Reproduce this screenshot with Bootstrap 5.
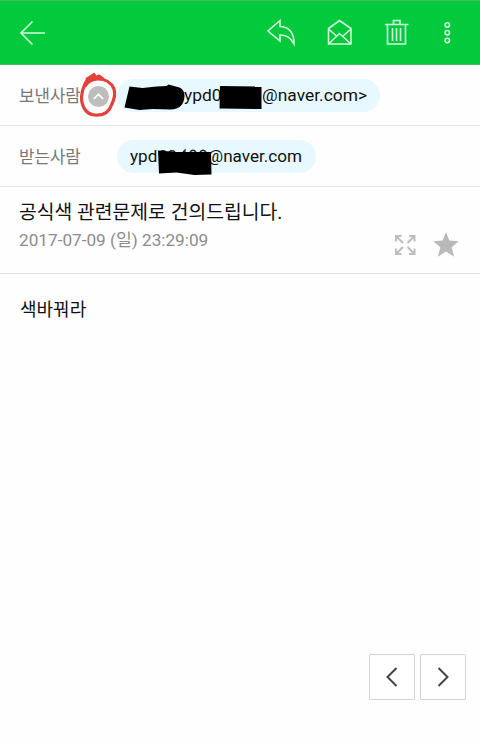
<!DOCTYPE html>
<html lang="ko">

<head>
    <meta charset="UTF-8" />
    <meta name="viewport" content="width=device-width, initial-scale=1" />
    <title>메일</title>
    <!-- Bootstrap 5 CSS -->
    <link href="https://cdn.jsdelivr.net/npm/bootstrap@5.3.0/dist/css/bootstrap.min.css" rel="stylesheet" />
    <style>
        body {
            font-family: Roboto, "Noto Sans CJK KR", sans-serif;
            background: #fefefe;
            color: #111;
            overflow: hidden;
        }

        svg {
            display: block;
            fill: none;
            overflow: visible;
        }

        .topbar {
            height: 65px;
            background: #03c93c;
            border-top: 1px solid #46b963;
            border-bottom: 1px solid #3cbd60;
        }

        .topbar svg {
            stroke: #d4f7dc;
            stroke-width: 1.6;
        }

        .btn-icon {
            padding: 0;
            border: 0;
        }

        .addr-row {
            height: 61px;
            border-bottom: 1px solid #e3e3e3;
        }

        .addr-label {
            width: 98px;
            padding: 3px 0 0 19px;
            font-size: 16.8px;
            color: #777;
        }

        .fold {
            left: 78px;
            top: 7px;
        }

        .addr-chip {
            height: 33px;
            border-radius: 17px;
            background: #e8f8ff;
            font-size: 17.4px;
            line-height: 33px;
            white-space: pre;
        }

        .chip-from {
            width: 263px;
            margin-right: 100px;
        }

        .chip-to {
            width: 199px;
            margin-left: 19px;
            font-size: 17.1px;
        }

        .scribble {
            fill: #000;
        }

        .subject-box {
            height: 87px;
            padding: 12px 19px 0;
            border-bottom: 1px solid #e0e0e0;
        }

        .subject {
            font-size: 19.3px;
            line-height: 28px;
            letter-spacing: .02px;
        }

        .sent-at {
            font-size: 17.2px;
            line-height: 27px;
            color: #8c8c8c;
        }

        .mail-body {
            height: 380px;
            padding: 22px 20px 0;
            font-size: 18px;
            line-height: 27px;
        }

        .pager {
            gap: 5px;
            padding-right: 14px;
        }

        .btn-page {
            width: 46px;
            height: 46px;
            padding: 0;
            border: 1.5px solid #d4d4d4;
            border-radius: 1px;
            background: #fff;
        }

        .btn-page svg {
            margin: auto;
            stroke: #444;
            stroke-width: 2;
        }
    </style>
</head>

<body>
    <nav class="topbar d-flex align-items-start">
        <button type="button" class="btn btn-icon" aria-label="뒤로">
            <svg width="60" height="63"><path d="M45 32H21M32.500 20.500L21 32l11.500 11.500" /></svg>
        </button>
        <div class="ms-auto d-flex">
            <button type="button" class="btn btn-icon" aria-label="답장">
                <svg width="56" height="63" viewBox="258 1 56 63"><path d="M280 20.500L268 31l12 10v-6c6.500 0 11 3 14 8.800C294.500 33 289 26.700 280 26.500z" /></svg>
            </button>
            <button type="button" class="btn btn-icon" aria-label="읽음">
                <svg width="56" height="63" viewBox="314 1 56 63"><path d="M328.500 28.500L339.500 20.500L351 28.500v15.500h-22.500zM328.500 29l8 7M351 29l-8 7M328.500 44l11-10.500L351 44" /></svg>
            </button>
            <button type="button" class="btn btn-icon" aria-label="삭제">
                <svg width="56" height="63" viewBox="370 1 56 63"><path d="M385 24.500h23.500M393.500 24v-3.500h6.500V24M387.500 24.500V44h18V24.500M392.500 28v13M396.500 28v13M400.500 28v13" /></svg>
            </button>
            <button type="button" class="btn btn-icon" aria-label="더보기">
                <svg width="54" height="63" viewBox="426 1 54 63"><circle cx="447.300" cy="25" r="2.200" /><circle cx="447.300" cy="32.700" r="2.200" /><circle cx="447.300" cy="40.500" r="2.200" /></svg>
            </button>
        </div>
    </nav>

    <section class="addr-row d-flex align-items-center position-relative">
        <span class="addr-label text-nowrap">보낸사람</span>
        <svg class="fold position-absolute" width="40" height="46" viewBox="78 72 40 46">
            <circle cx="98.500" cy="96.500" r="10.500" fill="#bdbdbd" />
            <path d="M93.800 99l4.700-4.700 4.700 4.700" stroke="#fff" stroke-width="1.700" />
            <path d="M92 76c-6 3-10 13-10.500 21 0 9 4 17 13 18 10 1 15-4 17-10 3-6 4-11 2.500-16-3-7-9-10-16-10-6 0-10 3-13 7M87 79l7-4.500 1 3M88 82l11-6 4 3" stroke="#e5403a" stroke-width="3.200" stroke-linejoin="round" stroke-linecap="round" />
        </svg>
        <div class="addr-chip chip-from position-relative ms-auto d-flex">
            <span style="margin-left: 67px;">ypd0</span>
            <span class="ms-auto" style="margin-right: 13px;">@naver.com&gt;</span>
            <svg class="scribble position-absolute top-0 start-0" width="263" height="33" viewBox="117 79 263 33">
                <path d="M129.500 86.500l13 1.500 14-1.500 10-.5 2-1.500 11 3c4 2 5 5 5 9-.5 8-5 13-14 13l-18-.5-13 1-15-2.500z" />
                <path d="M220 86l41.500.500v22.500l-42-.5z" />
            </svg>
        </div>
    </section>

    <section class="addr-row d-flex align-items-center">
        <span class="addr-label text-nowrap">받는사람</span>
        <div class="addr-chip chip-to position-relative d-flex">
            <span style="margin-left: 13px;">ypd</span>
            <span class="ms-auto" style="margin-right: 14px;">@naver.com</span>
            <svg class="scribble position-absolute top-0 start-0" width="199" height="33" viewBox="117 140 199 33">
                <path d="M160 152q3-2.500 6 0M169 152q3-2.500 6 0M183 152l2-2v3M190 152q3-3.500 6 0M200 152q3-3.500 6 0" fill="none" stroke="#222" stroke-width="1.300" />
                <path d="M158 150.500l18 1.500 35 0 .5 22.500-17 .5-18-2.500-17.500 1z" />
            </svg>
        </div>
    </section>

    <section class="subject-box d-flex justify-content-between">
        <div class="text-nowrap">
            <div class="subject">공식색 관련문제로 건의드립니다.</div>
            <div class="sent-at">2017-07-09 (일) 23:29:09</div>
        </div>
        <svg width="66" height="60" viewBox="395 199 66 60">
            <path d="M396 241.500V236h5.500M396.500 236.500l6.500 6.500M409 236h5.500v5.500M414 236.500l-6.500 6.500M396 248.500v5.500h5.500M396.500 253.500l6.500-6.500M414.500 248.500v5.500H409M414 253.500l-6.500-6.500" stroke="#bdbdbd" stroke-width="2" />
            <path d="M446 232l3.400 8.600 9.400.6-7.200 6 2.600 9.600-8.200-5.300-8.200 5.300 2.600-9.600-7.200-6 9.400-.6z" fill="#b9b9b9" />
        </svg>
    </section>

    <main class="mail-body">색바꿔라</main>

    <div class="pager d-flex justify-content-end">
        <button type="button" class="btn btn-page" aria-label="이전">
            <svg width="42" height="42"><path d="M25.500 12L16.500 21l9 9" /></svg>
        </button>
        <button type="button" class="btn btn-page" aria-label="다음">
            <svg width="42" height="42"><path d="M16.500 12l9 9-9 9" /></svg>
        </button>
    </div>

    <script src="https://cdn.jsdelivr.net/npm/bootstrap@5.3.0/dist/js/bootstrap.bundle.min.js"></script>
</body>

</html>
